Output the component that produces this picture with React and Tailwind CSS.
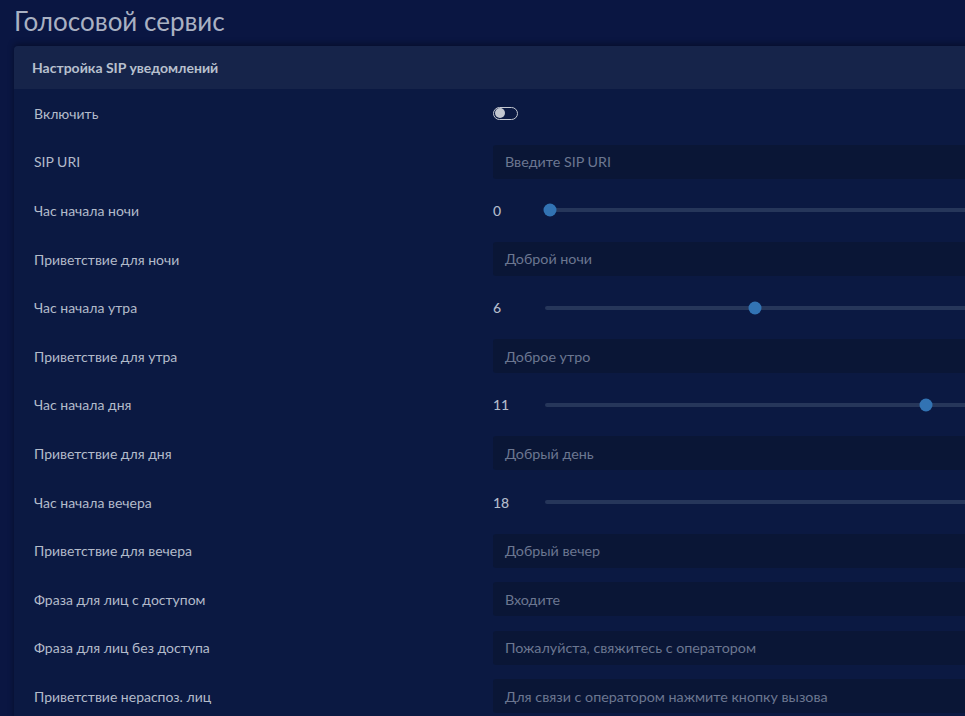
import React from "react";

const rows = [
  { label: "Включить", type: "toggle" },
  { label: "SIP URI", type: "input", ph: "Введите SIP URI" },
  { label: "Час начала ночи", type: "slider", value: 0 },
  { label: "Приветствие для ночи", type: "input", ph: "Доброй ночи" },
  { label: "Час начала утра", type: "slider", value: 6 },
  { label: "Приветствие для утра", type: "input", ph: "Доброе утро" },
  { label: "Час начала дня", type: "slider", value: 11 },
  { label: "Приветствие для дня", type: "input", ph: "Добрый день" },
  { label: "Час начала вечера", type: "slider", value: 18 },
  { label: "Приветствие для вечера", type: "input", ph: "Добрый вечер" },
  { label: "Фраза для лиц с доступом", type: "input", ph: "Входите" },
  { label: "Фраза для лиц без доступа", type: "input", ph: "Пожалуйста, свяжитесь с оператором" },
  { label: "Приветствие нераспоз. лиц", type: "input", ph: "Для связи с оператором нажмите кнопку вызова" },
];

function Control({ row }) {
  if (row.type === "toggle") {
    return (
      <div className="flex h-[13px] w-[25px] items-center rounded-full border border-[#c3c7d0] px-[1px]">
        <div className="h-[10px] w-[10px] rounded-full bg-[#c3c7d0]" />
      </div>
    );
  }
  if (row.type === "input") {
    return (
      <div className="flex h-[34px] w-full items-center rounded-[3px] bg-[#0a1636] pl-[12px] text-[14.3px] text-[#6c7791]">
        {row.ph}
      </div>
    );
  }
  const left = 5 + row.value * 34.2;
  return (
    <div className="flex w-full items-center">
      <div className="w-[52px] text-[14px] font-medium text-[#b3bbca]">{row.value}</div>
      <div className="relative h-[4px] w-[796px] rounded-full bg-[#26365a]">
        <div
          className="absolute top-1/2 h-[13px] w-[13px] -translate-x-1/2 -translate-y-1/2 rounded-full bg-[#3273b3]"
          style={{ left: `${left}px` }}
        />
      </div>
    </div>
  );
}

export default function App() {
  return (
    <div
      className="h-[716px] w-[965px] overflow-hidden bg-[#0a1642]"
      style={{ fontFamily: "Lato, 'Noto Sans', sans-serif" }}
    >
      <div className="w-[1400px]">
        <h1 className="pl-[14px] pt-[5px] text-[26px] leading-[33px] text-[#a9b1c2]">Голосовой сервис</h1>
        <div className="ml-[14px] mt-[8px] rounded-t-[4px] bg-[#0b1942] shadow-[0_-2px_6px_rgba(0,0,0,0.35)]">
          <div className="flex h-[43px] items-center rounded-t-[4px] bg-[#16244a] pl-[18px] text-[14px] font-bold text-[#b8c0ce]">
            Настройка SIP уведомлений
          </div>
          <div>
            {rows.map((row, i) => (
              <div key={i} className="flex h-[48.6px] items-center">
                <div className="w-[479px] pl-[20px] text-[14px] text-[#b3bbca]">{row.label}</div>
                <div className="flex flex-1 items-center">
                  <Control row={row} />
                </div>
              </div>
            ))}
          </div>
        </div>
      </div>
    </div>
  );
}
